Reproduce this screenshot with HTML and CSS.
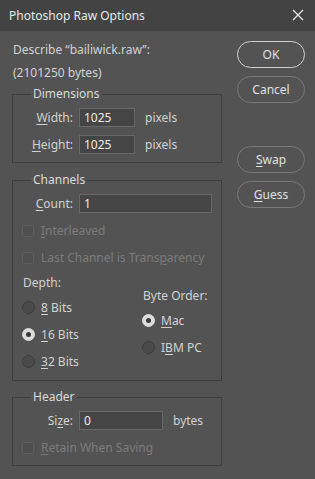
FILE: index.html
```html
<!DOCTYPE html>
<html>
<head>
<meta charset="utf-8">
<link rel="stylesheet" href="styles.css">
</head>
<body>
<div class="dialog">
  <div class="titlebar">
    <span class="title">Photoshop Raw Options</span>
    <svg class="close" width="12" height="12" viewBox="0 0 12 12"><path d="M1 1 L11 11 M11 1 L1 11" stroke="#e6e6e6" stroke-width="1.3" fill="none"/></svg>
  </div>
  <div class="content">
    <div class="left">
      <div class="desc">Describe “bailiwick.raw”:</div>
      <div class="desc">(2101250 bytes)</div>

      <fieldset class="group">
        <legend>Dimensions</legend>
        <div class="row">
          <label class="lbl"><u>W</u>idth:</label>
          <div class="input w-short">1025</div>
          <span class="unit">pixels</span>
        </div>
        <div class="row">
          <label class="lbl"><u>H</u>eight:</label>
          <div class="input w-short">1025</div>
          <span class="unit">pixels</span>
        </div>
      </fieldset>

      <fieldset class="group gap">
        <legend>Channels</legend>
        <div class="row">
          <label class="lbl"><u>C</u>ount:</label>
          <div class="input w-long">1</div>
        </div>
        <div class="row check disabled">
          <span class="box"></span>
          <span><u>I</u>nterleaved</span>
        </div>
        <div class="row check disabled">
          <span class="box"></span>
          <span>Last Channel is Trans<u>p</u>arency</span>
        </div>
        <div class="depth">
          <div class="col col-left">
            <div class="sublabel">Depth:</div>
            <div class="row radio-row"><span class="radio"></span><span><u>8</u> Bits</span></div>
            <div class="row radio-row"><span class="radio on"></span><span><u>1</u>6 Bits</span></div>
            <div class="row radio-row"><span class="radio"></span><span><u>3</u>2 Bits</span></div>
          </div>
          <div class="col col-right">
            <div class="sublabel">Byte Order:</div>
            <div class="row radio-row"><span class="radio on"></span><span><u>M</u>ac</span></div>
            <div class="row radio-row"><span class="radio"></span><span>I<u>B</u>M PC</span></div>
          </div>
        </div>
      </fieldset>

      <fieldset class="group gap2">
        <legend>Header</legend>
        <div class="row">
          <label class="lbl">Si<u>z</u>e:</label>
          <div class="input w-mid">0</div>
          <span class="unit">bytes</span>
        </div>
        <div class="row check disabled">
          <span class="box"></span>
          <span><u>R</u>etain When Saving</span>
        </div>
      </fieldset>
    </div>

    <div class="right">
      <div class="btn primary">OK</div>
      <div class="btn">Cancel</div>
      <div class="btn spaced"><u>S</u>wap</div>
      <div class="btn"><u>G</u>uess</div>
    </div>
  </div>
</div>
</body>
</html>
```

FILE: styles.css
```css
html, body {
  margin: 0;
  padding: 0;
  background: #535353;
}
body {
  width: 315px;
  height: 479px;
  overflow: hidden;
  font-family: "Noto Sans", "Open Sans", sans-serif;
  font-size: 12px;
  color: #d2d2d2;
}
u {
  text-decoration: underline;
  text-underline-offset: 2px;
}
.dialog {
  display: flex;
  flex-direction: column;
  height: 479px;
}
.titlebar {
  height: 31px;
  background: #434343;
  display: flex;
  align-items: center;
  justify-content: space-between;
  padding: 0 11px 1px 9px;
  box-sizing: border-box;
  flex-shrink: 0;
}
.title {
  font-size: 12px;
  color: #e8e8e8;
}
.close {
  display: block;
}
.content {
  display: flex;
  padding: 7px 0 0 12px;
}
.left {
  width: 210px;
}
.desc {
  height: 23px;
  line-height: 23px;
  padding-left: 1px;
}
.group {
  margin: 2px 0 0 0;
  padding: 2px 0 4px 0;
  border: 1px solid #3d3d3d;
  min-width: 0;
}
.group.gap { margin-top: 9px; padding-bottom: 5px; }
.group.gap2 { margin-top: 8px; padding-top: 2px; }
.group legend {
  margin-left: 18px;
  padding: 0 2px;
  line-height: 16px;
  height: 16px;
  color: #dadada;
}
.row {
  display: flex;
  align-items: center;
  height: 27px;
}
.lbl {
  width: 60px;
  text-align: right;
  margin-right: 6px;
}
.input {
  height: 19px;
  box-sizing: border-box;
  border: 1px solid #686868;
  background: #454545;
  color: #ececec;
  padding-left: 4px;
  line-height: 17px;
}
.w-short { width: 56px; }
.w-long { width: 133px; }
.w-mid { width: 84px; }
.unit {
  margin-left: 10px;
}
.check {
  padding-left: 9px;
}
.disabled {
  color: #7c7c7c;
}
.box {
  width: 12px;
  height: 12px;
  box-sizing: border-box;
  border: 1px solid #5e5e5e;
  background: #4f4f4f;
  border-radius: 2px;
  margin-right: 7px;
}
.depth {
  display: flex;
}
.col-left {
  padding-left: 9px;
  width: 120px;
}
.col-right {
  margin-top: 13px;
}
.sublabel {
  height: 23px;
  line-height: 23px;
  padding-left: 1px;
}
.radio {
  width: 13px;
  height: 13px;
  box-sizing: border-box;
  border-radius: 50%;
  border: 1px solid #3c3c3c;
  background: #4a4a4a;
  margin-right: 6px;
  position: relative;
}
.radio.on {
  background: #dcdcdc;
  border-color: #dcdcdc;
}
.radio.on::after {
  content: "";
  position: absolute;
  left: 3px;
  top: 3px;
  width: 5px;
  height: 5px;
  border-radius: 50%;
  background: #3a3a3a;
}
.right {
  margin-left: 15px;
  padding-top: 3px;
  display: flex;
  flex-direction: column;
  gap: 8px;
}
.btn {
  width: 68px;
  height: 27px;
  box-sizing: border-box;
  border: 1px solid #7a7a7a;
  border-radius: 14px;
  display: flex;
  align-items: center;
  justify-content: center;
  color: #e0e0e0;
  font-size: 12px;
}
.btn.primary {
  border-color: #cfcfcf;
}
.btn.spaced {
  margin-top: 35px;
}
```
